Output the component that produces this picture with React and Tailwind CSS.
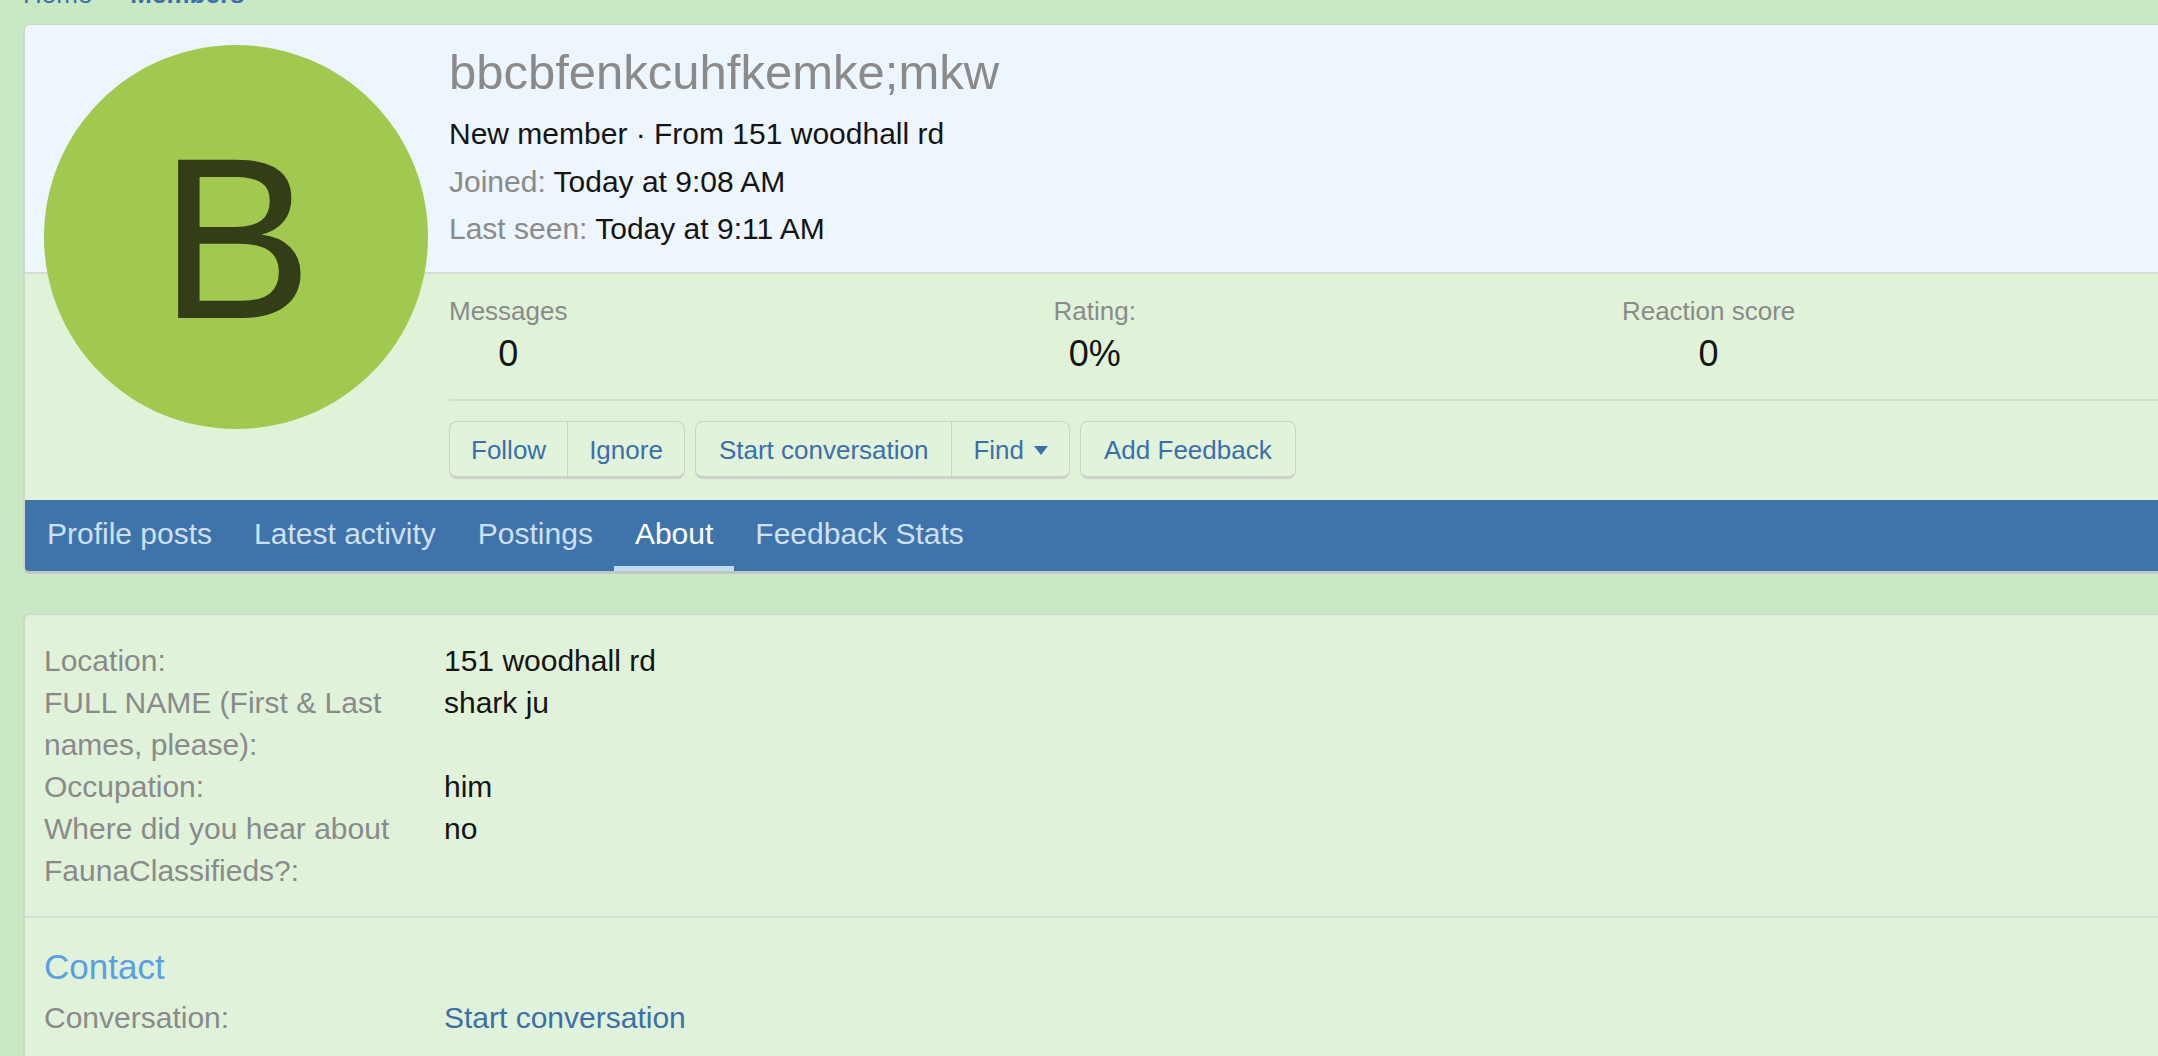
import React from 'react'

const tabs = ['Profile posts', 'Latest activity', 'Postings', 'About', 'Feedback Stats']

const stats = [
  { label: 'Messages', value: '0' },
  { label: 'Rating:', value: '0%' },
  { label: 'Reaction score', value: '0' },
]

const about = [
  { label: 'Location:', value: '151 woodhall rd' },
  { label: 'FULL NAME (First & Last names, please):', value: 'shark ju' },
  { label: 'Occupation:', value: 'him' },
  { label: 'Where did you hear about FaunaClassifieds?:', value: 'no' },
]

function Btn({ children, last, wide }) {
  return (
    <span className={`${wide ? 'px-[23px]' : 'px-[21px]'} pt-[3px] flex items-center text-[26px] text-[#3c6faa] ${last ? '' : 'border-r border-[#cdd1cb]'}`}>{children}</span>
  )
}

function Group({ children }) {
  return (
    <div className="flex h-[58px] rounded-[8px] border border-b-[3px] border-[#cdd1cb] bg-[#e1f3db]">{children}</div>
  )
}

export default function App() {
  return (
    <div className="h-[1056px] w-full overflow-hidden bg-[#c9e9c5] pl-[23px] font-['Liberation_Sans',Arial,sans-serif]">
      {/* breadcrumb, mostly scrolled off */}
      <div className="h-[24px] overflow-hidden">
        <div className="-mt-[19px] flex items-center gap-[16px] text-[26px] leading-[26px] text-[#3c6faa]">
          <span>Home</span>
          <span className="text-[#8a8a8a] text-[18px]">›</span>
          <span className="font-bold">Members</span>
          <span className="text-[#8a8a8a] text-[18px]">›</span>
        </div>
      </div>

      {/* member header card */}
      <div className="relative -mr-[40px] rounded-[6px] border-l-2 border-t border-b-[3px] border-[#d0d6cd] border-b-[#bfc7c3] overflow-hidden">
        <div className="absolute left-[19px] top-[20px] flex h-[384px] w-[384px] items-center justify-center rounded-full bg-[#a2c94f]">
          <span className="text-[230px] leading-none text-[#333d18] mt-[4px]">B</span>
        </div>

        <div className="bg-[#edf5fd] pl-[424px] pt-[18px] pb-[19px] border-b-2 border-[#d7ddd6]">
          <h1 className="text-[49px] leading-[59px] text-[#8a8a8a]">bbcbfenkcuhfkemke;mkw</h1>
          <div className="mt-[8px] text-[30px] leading-[47.5px] text-[#141414]">
            <div>New member · From 151 woodhall rd</div>
            <div><span className="text-[#8a8a8a]">Joined:</span> Today at 9:08 AM</div>
            <div><span className="text-[#8a8a8a]">Last seen:</span> Today at 9:11 AM</div>
          </div>
        </div>

        <div className="bg-[#e0f3d9] pl-[424px]">
          <div className="flex gap-[486px] pt-[20px] pb-[24px] border-b-2 border-[#d4dcd2]">
            {stats.map(s => (
              <div key={s.label} className="flex flex-col items-center">
                <span className="text-[26px] leading-[34px] text-[#8a8a8a]">{s.label}</span>
                <span className="mt-[4px] text-[36px] leading-[43px] text-[#141414]">{s.value}</span>
              </div>
            ))}
          </div>
          <div className="flex gap-[10px] pt-[20px] pb-[21px]">
            <Group><Btn>Follow</Btn><Btn last>Ignore</Btn></Group>
            <Group>
              <Btn wide>Start conversation</Btn>
              <Btn last>
                Find
                <svg className="ml-[10px]" width="14" height="9" viewBox="0 0 14 9"><path d="M0 0h14L7 9z" fill="#3c6faa" /></svg>
              </Btn>
            </Group>
            <Group><Btn last wide>Add Feedback</Btn></Group>
          </div>
        </div>

        <div className="flex h-[71px] bg-[#3f73ab] pl-[1px]">
          {tabs.map(t => (
            <div key={t} className={`flex items-center px-[21px] text-[30px] border-b-[5px] ${t === 'About' ? 'text-white border-[#c3dbf2]' : 'text-[#cfe0f3] border-transparent'}`}>
              <span className="mt-[1px]">{t}</span>
            </div>
          ))}
        </div>
      </div>

      {/* about block */}
      <div className="mt-[40px] -mr-[40px] rounded-[6px] border-l-2 border-t border-[#d0d6cd] bg-[#e0f3da]">
        <div className="px-[19px] pt-[25px] pb-[24px] text-[30px] leading-[42px]">
          {about.map(r => (
            <div key={r.label} className="grid grid-cols-[400px_1fr]">
              <div className="pr-[40px] text-[#8a8a8a]">{r.label}</div>
              <div className="text-[#141414]">{r.value}</div>
            </div>
          ))}
        </div>
        <div className="border-t-2 border-[#d9ddd7] px-[19px] pt-[28px] pb-[40px]">
          <h3 className="text-[35px] leading-[42px] text-[#5a9fe3]">Contact</h3>
          <div className="mt-[9px] grid grid-cols-[400px_1fr] text-[30px] leading-[42px]">
            <div className="text-[#8a8a8a]">Conversation:</div>
            <div className="text-[#3c6faa]">Start conversation</div>
          </div>
        </div>
      </div>
    </div>
  )
}
